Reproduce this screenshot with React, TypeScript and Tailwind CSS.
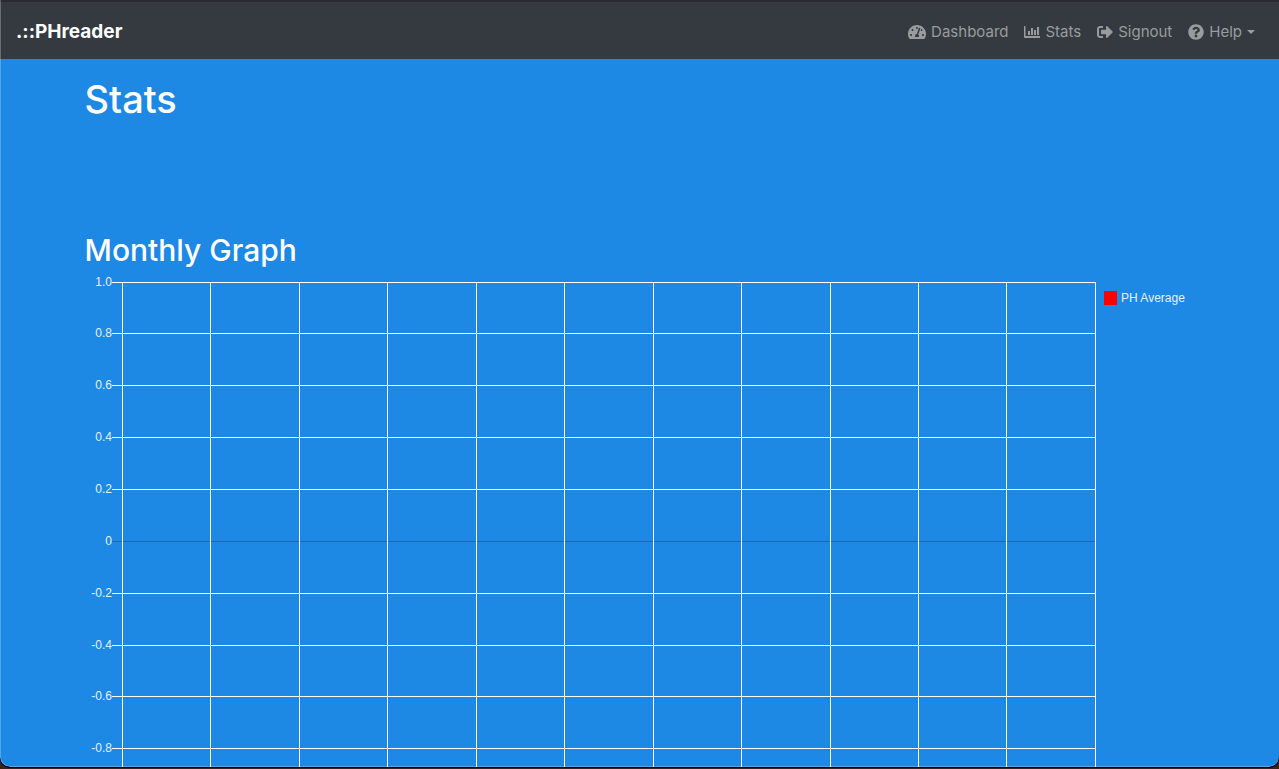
import {
  FaQuestionCircle,
  FaSignOutAlt,
  FaTachometerAlt,
} from "react-icons/fa";

function ChartIcon() {
  return (
    <svg viewBox="0 0 16 16" className="h-4 w-4" fill="currentColor" aria-hidden="true">
      <path d="M.5 2H1a.5.5 0 0 1 .5.5V12h14a.5.5 0 0 1 .5.5v1a.5.5 0 0 1-.5.5H1a1 1 0 0 1-1-1V2.500A.5.5 0 0 1 .5 2z" />
      <path d="M4 7h2v4H4zM7 4h2v7H7zM10 6h2v5h-2zM13 3h2v8h-2z" />
    </svg>
  );
}

const navLinks = [
  { label: "Dashboard", href: "#dashboard", icon: <FaTachometerAlt className="h-4 w-[18px]" /> },
  { label: "Stats", href: "#stats", icon: <ChartIcon /> },
  { label: "Signout", href: "#signout", icon: <FaSignOutAlt className="h-4 w-4" /> },
];

const ticks = [
  { label: "1.0", y: 7 },
  { label: "0.8", y: 58 },
  { label: "0.6", y: 110 },
  { label: "0.4", y: 162 },
  { label: "0.2", y: 214 },
  { label: "0", y: 266 },
  { label: "-0.2", y: 318 },
  { label: "-0.4", y: 370 },
  { label: "-0.6", y: 421 },
  { label: "-0.8", y: 473 },
];
const columns = [37, 125, 214, 302, 391, 479, 568, 656, 745, 833, 921, 1010];

const PLOT_LEFT = 37;
const PLOT_RIGHT = 1010;

function Navbar() {
  return (
    <nav className="flex h-[59px] items-center justify-between border-t-2 border-[#2a2b30] bg-[#343a40] px-4 pt-0.5">
      <a href="#home" className="text-[19px] leading-8 font-bold text-white [font-feature-settings:'calt'_0]">
        .::PHreader
      </a>
      <ul className="flex items-center text-[15px] leading-6 text-[#999c9f]">
        {navLinks.map((link) => (
          <li key={link.label}>
            <a href={link.href} className="flex items-center gap-[5px] px-2 py-2 hover:text-white">
              {link.icon}
              {link.label}
            </a>
          </li>
        ))}
        <li>
          <button
            type="button"
            aria-haspopup="menu"
            className="flex items-center gap-[5px] px-2 py-2 hover:text-white"
          >
            <FaQuestionCircle className="h-4 w-4" />
            Help
            <svg viewBox="0 0 8 4" className="h-1 w-2" fill="currentColor" aria-hidden="true">
              <path d="M0 0h8L4 4z" />
            </svg>
          </button>
        </li>
      </ul>
    </nav>
  );
}

function MonthlyGraph() {
  return (
    <svg
      viewBox="0 0 1110 540"
      className="block w-full font-['Liberation_Sans',Arial,sans-serif] text-xs"
      role="img"
      aria-label="PH average by month"
    >
      {ticks.map(({ label, y }) => (
        <g key={label}>
          <line
            x1={PLOT_LEFT - 10}
            x2={PLOT_RIGHT}
            y1={y + 0.5}
            y2={y + 0.5}
            stroke={label === "0" ? "#166bb9" : "#fff"}
          />
          <text x={PLOT_LEFT - 10} y={y + 4} textAnchor="end" fill="#e4f1fc">
            {label}
          </text>
        </g>
      ))}
      {columns.map((x) => (
        <line key={x} x1={x + 0.5} x2={x + 0.5} y1="7" y2="525" stroke="#fff" />
      ))}
      <rect x="1019" y="16" width="13" height="14" fill="#f00" />
      <text x="1036" y="27" fill="#e4f1fc">
        PH Average
      </text>
    </svg>
  );
}

export default function App() {
  return (
    <div className="flex h-screen flex-col overflow-hidden bg-[#38221a] pb-px font-['Inter','Noto_Sans',sans-serif]">
      <div className="min-h-0 flex-1 overflow-hidden rounded-b-[10px] border-b border-black bg-black">
        <div className="relative h-full overflow-hidden rounded-b-[10px] bg-[#1e88e5]">
          <Navbar />
          <main className="mx-auto max-w-[1110px] text-white">
            <h1 className="pt-4 text-[38px] leading-12 font-medium">Stats</h1>
            <section className="pt-[108px]">
              <h2 className="text-[30px] leading-[38px] font-medium">Monthly Graph</h2>
              <div className="pt-[6px]">
                <MonthlyGraph />
              </div>
            </section>
          </main>
          {/* window edge highlight */}
          <div className="pointer-events-none absolute inset-0 rounded-b-[10px] border-b border-l border-white/25" />
        </div>
      </div>
    </div>
  );
}
